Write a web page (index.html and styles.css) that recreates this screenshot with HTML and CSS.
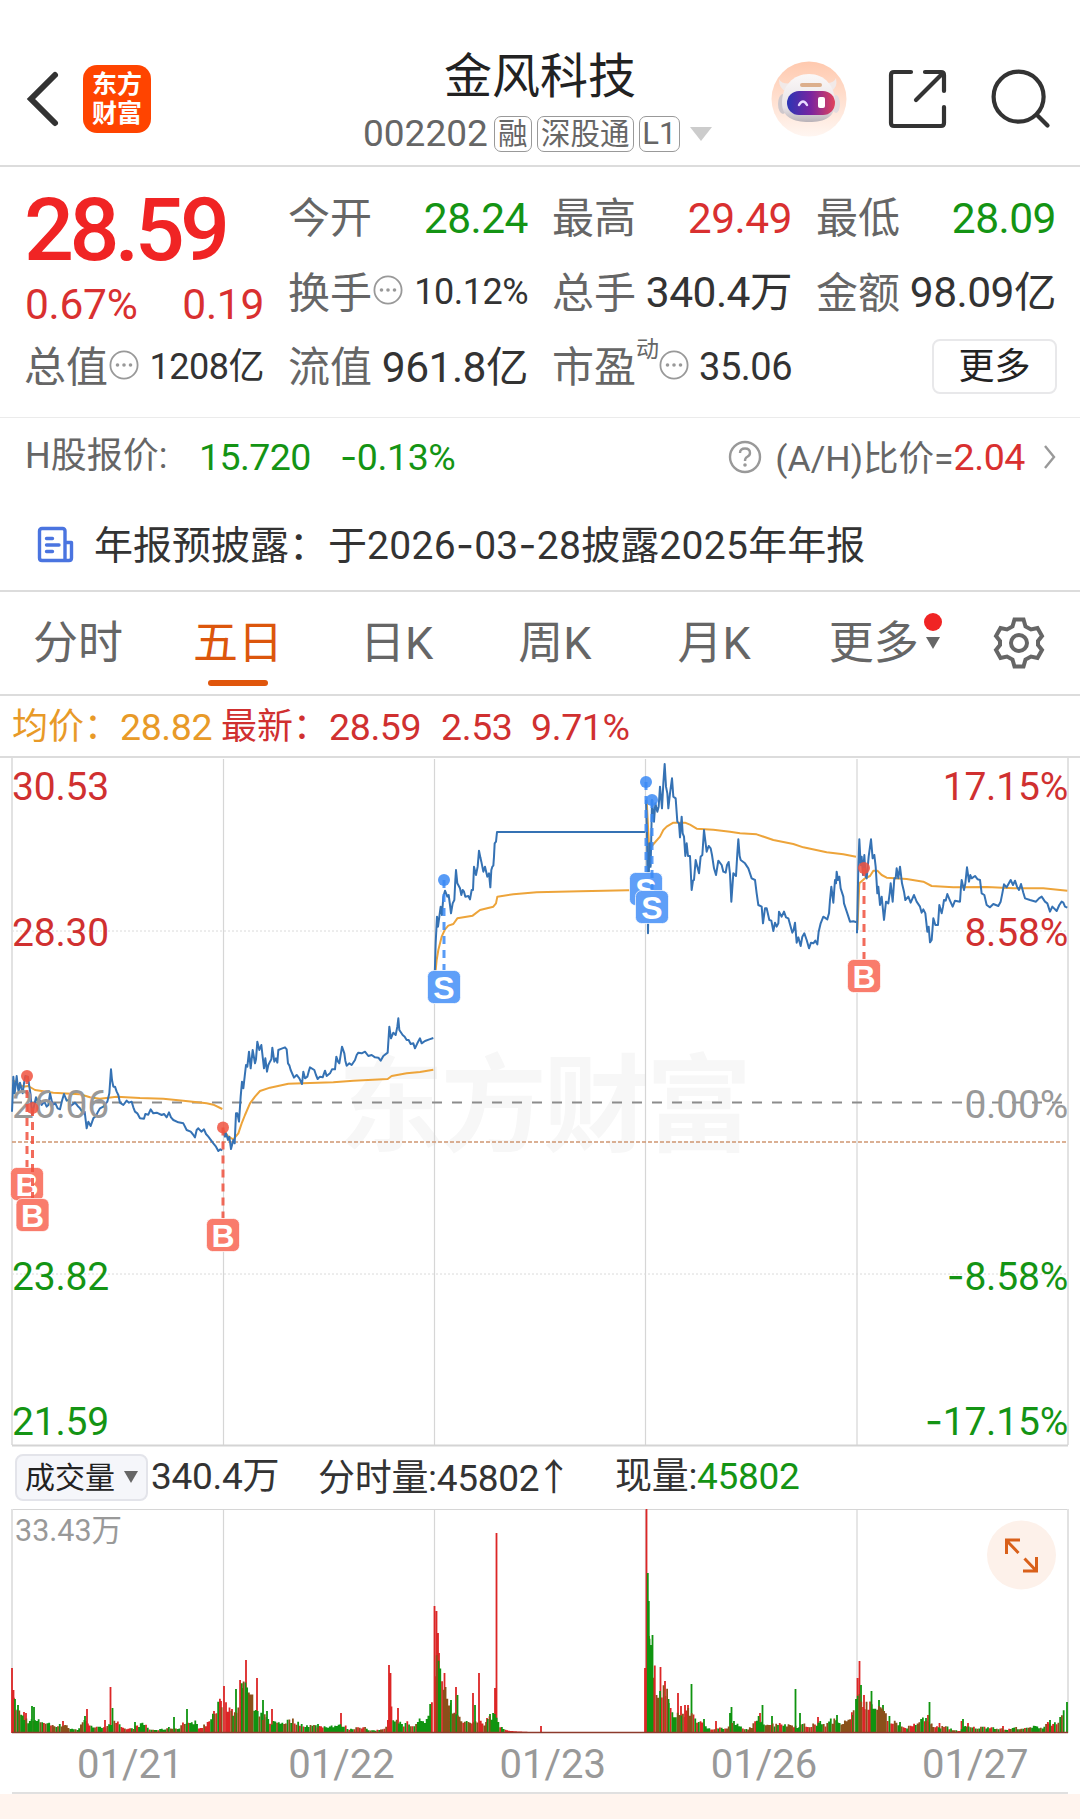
FILE: index.html
```html
<!DOCTYPE html>
<html lang="zh-CN">
  <head>
    <meta charset="UTF-8" />
    <meta name="viewport" content="width=device-width, initial-scale=1.0" />
    <title>金风科技 002202</title>
    <link rel="stylesheet" href="styles.css" />
  </head>
  <body>
    <header class="header">
      <div class="header-left">
        <svg class="back" width="36" height="60" viewBox="0 0 36 60">
          <path d="M30 6 L6 30 L30 54" fill="none" stroke="#333" stroke-width="6" stroke-linecap="round" />
        </svg>
        <div class="logo"><span>东方</span><span>财富</span></div>
      </div>
      <div class="header-title">
        <h1>金风科技</h1>
        <div class="code-row">
          <span class="code">002202</span>
          <span class="tag">融</span>
          <span class="tag tag-sgt">深股通</span>
          <span class="tag tag-l1">L1</span>
          <i class="caret"></i>
        </div>
      </div>
      <div class="header-right">
        <svg width="76" height="76" viewBox="0 0 76 76">
          <defs>
            <linearGradient id="halo" x1="0" y1="0" x2="0" y2="1">
              <stop offset="0" stop-color="#ffc9ae" />
              <stop offset="1" stop-color="#fff6f1" />
            </linearGradient>
            <linearGradient id="helmet" x1="0" y1="0" x2="0" y2="1">
              <stop offset="0" stop-color="#fbf8f8" />
              <stop offset=".7" stop-color="#e8e3e6" />
              <stop offset="1" stop-color="#b9b2b8" />
            </linearGradient>
            <linearGradient id="visor" x1="0" y1="0" x2="1" y2="0">
              <stop offset="0" stop-color="#2b35b5" />
              <stop offset=".5" stop-color="#7a249f" />
              <stop offset="1" stop-color="#e0435c" />
            </linearGradient>
          </defs>
          <circle cx="38" cy="38" r="37.5" fill="url(#halo)" />
          <path d="M8 18 Q8 28 15 30 L22 22 Q11 24 8 18 Z M65 17 Q67 27 60 30 L53 22 Q63 23 65 17 Z" fill="#f1e9e8" />
          <ellipse cx="12" cy="43" rx="5" ry="10" fill="#cfc8cc" />
          <ellipse cx="65" cy="43" rx="4" ry="9" fill="#e2dcdf" />
          <path d="M38 13 C54 13 64 25 64 42 C64 56 54 61 38 61 C22 61 11 56 11 42 C11 25 22 13 38 13 Z" fill="url(#helmet)" />
          <rect x="29" y="22" width="22" height="4" rx="2" fill="#dcae8c" />
          <rect x="16" y="30" width="48" height="24" rx="12" fill="url(#visor)" />
          <path d="M28 44 Q32 37 36 44" fill="none" stroke="#e9dcff" stroke-width="2.4" stroke-linecap="round" />
          <rect x="47" y="36" width="7" height="11" rx="2" fill="#fff" />
        </svg>
        <svg class="share" width="64" height="64" viewBox="0 0 64 64">
          <g fill="none" stroke="#333" stroke-width="4.2" stroke-linecap="round" stroke-linejoin="round">
            <path d="M25 5 H8 Q5 5 5 8 V56 Q5 59 8 59 H55 Q58 59 58 56 V40" />
            <path d="M39 5 H55 Q58 5 58 8 V24 M57 6 L30 33" />
          </g>
        </svg>
        <svg width="64" height="64" viewBox="0 0 64 64">
          <g fill="none" stroke="#333" stroke-width="4.2" stroke-linecap="round">
            <circle cx="31.6" cy="29.7" r="25" />
            <path d="M50 48 L60.5 58.500" />
          </g>
        </svg>
      </div>
    </header>

    <section class="quote">
      <div class="price">
        <div class="price-now">28.59</div>
        <div class="price-change"><span>0.67%</span><span>0.19</span></div>
      </div>
      <div class="cell"><label>今开</label><b class="down">28.24</b></div>
      <div class="cell"><label>最高</label><b class="up">29.49</b></div>
      <div class="cell"><label>最低</label><b class="down">28.09</b></div>
      <div class="cell">
        <label>换手</label>
        <svg class="dots" viewBox="0 0 30 30"><use href="#more-dots" /></svg>
        <b class="small">10.12%</b>
      </div>
      <div class="cell"><label>总手</label><b>340.4万</b></div>
      <div class="cell"><label>金额</label><b>98.09亿</b></div>
      <div class="cell">
        <label>总值</label>
        <svg class="dots" viewBox="0 0 30 30"><use href="#more-dots" /></svg>
        <b class="small">1208亿</b>
      </div>
      <div class="cell"><label>流值</label><b>961.8亿</b></div>
      <div class="cell">
        <label>市盈</label><sup>动</sup>
        <svg class="dots" viewBox="0 0 30 30"><use href="#more-dots" /></svg>
        <b class="medium">35.06</b>
      </div>
      <div class="cell cell-more"><button class="more-btn">更多</button></div>
    </section>

    <section class="hshare">
      <span class="hshare-label">H股报价:</span>
      <span class="hshare-price">15.720</span>
      <span class="hshare-pct"><i class="minus">-</i>0.13%</span>
      <div class="ratio">
        <svg width="34" height="34" viewBox="0 0 34 34">
          <circle cx="17" cy="17" r="15" fill="none" stroke="#999" stroke-width="2.4" />
          <path d="M12 13 Q12 8.5 17 8.5 Q22 8.5 22 13 Q22 15.5 19 17 Q17 18 17 21" fill="none" stroke="#999" stroke-width="2.4" />
          <circle cx="17" cy="25" r="1.8" fill="#999" />
        </svg>
        <span class="ratio-label">(A/H)比价=</span><span class="ratio-value">2.04</span>
        <svg class="arrow" width="14" height="26" viewBox="0 0 14 26">
          <path d="M2 2 L11 13 L2 24" fill="none" stroke="#999" stroke-width="2.4" />
        </svg>
      </div>
    </section>

    <section class="notice">
      <svg width="38" height="38" viewBox="0 0 38 38">
        <g fill="none" stroke="#4a74e0" stroke-width="3.4" stroke-linejoin="round" stroke-linecap="round">
          <path d="M28 34.5 V5 Q28 2.5 25.500 2.500 H5 Q2.500 2.500 2.500 5 V32 Q2.500 34.500 5 34.500 H32 Q34.500 34.500 34.500 32 V16.500 H29" />
          <path d="M9.500 12.500 H15.500 M9.500 19 H22 M9.500 25.500 H15.500" />
        </g>
      </svg>
      <span>年报预披露：于<em>2026<i class="minus">-</i>03<i class="minus">-</i>28</em>披露<em>2025</em>年年报</span>
    </section>

    <nav class="tabs">
      <a>分时</a>
      <a class="active">五日</a>
      <a>日K</a>
      <a>周K</a>
      <a>月K</a>
      <a class="tab-more">更多<i class="tab-caret"></i><i class="tab-dot"></i></a>
      <svg class="gear" width="54" height="54" viewBox="0 0 54 54">
        <g fill="none" stroke="#666" stroke-width="4" stroke-linejoin="miter">
          <path d="M22.500 3.500 H31.500 L33.500 10.500 L39 13.500 L45.500 12 L50 20 L46 25 V29 L50 34 L45.500 42 L39 40.500 L33.500 43.500 L31.500 50.500 H22.500 L20.500 43.500 L15 40.500 L8.500 42 L4 34 L8 29 V25 L4 20 L8.500 12 L15 13.500 L20.500 10.500 Z" />
          <circle cx="27" cy="27" r="8" />
        </g>
      </svg>
    </nav>

    <div class="legend">
      <span class="avg">均价：</span><span class="avg n1">28.82</span>
      <span class="last">最新：</span><span class="last n1">28.59</span>
      <span class="last n2">2.53</span>
      <span class="last n3">9.71%</span>
    </div>

    <svg class="chart" width="1080" height="689" viewBox="0 758 1080 689">
      <text class="watermark" x="338" y="1143" textLength="414">东方财富</text>
      <path class="grid" d="M223.500 759 V1445 M434.500 759 V1445 M645.500 759 V1445 M857 759 V1445" />
      <path class="grid-dot" d="M12 931 H1068 M12 1274 H1068" />
      <path class="frame" d="M12 758 V1445 M1068 758 V1445" />
      <path class="frame-bottom" d="M12 1445.500 H1068" />
      <path class="zero" d="M12 1102.500 H1068" />
      <path class="cost" d="M12 1142 H1068" />

      <g transform="translate(0 980) scale(.33333)">
        <polyline class="avg-line" points="38,300 50,310 70,320 85,318 105,330 160,338 240,343 270,352 300,356 350,350 420,354 490,356 550,362 620,370 640,374 667,387" />
        <polyline class="price-line" points="36,395 38,345 40,290 44,340 50,288 54,325 56,335 60,308 64,325 68,340 72,310 76,288 84,290 88,320 92,345 96,405 104,370 108,352 115,368 120,362 125,375 133,365 140,380 145,375 150,340 158,375 166,370 173,385 180,388 186,362 192,342 200,362 206,360 212,378 225,368 233,378 240,385 250,400 254,395 260,445 265,425 272,438 280,415 288,408 294,395 300,385 310,380 322,365 328,340 333,268 336,300 340,320 345,320 350,335 355,345 360,368 370,375 380,362 387,368 395,365 400,382 405,395 412,400 420,415 432,416 436,402 445,404 452,388 460,400 470,398 485,405 492,402 500,412 507,397 513,412 520,420 535,427 550,430 560,450 572,455 578,462 585,472 590,450 595,445 604,455 612,448 618,462 625,470 640,490 648,500 655,513 661,508 667,511" />
      </g>
      <g transform="translate(220 980) scale(.33333)">
        <polyline class="avg-line" points="10,450 25,470 40,478 55,460 65,430 75,405 90,370 105,350 120,333 150,323 205,311 270,309 340,307 400,302 503,297 515,288 560,280 600,276 640,269" />
        <polyline class="price-line" points="10,455 15,470 18,460 24,480 28,470 33,507 40,480 44,490 48,400 52,400 57,425 62,350 66,305 70,325 74,290 78,255 82,260 87,215 92,265 98,210 105,250 108,238 112,185 118,210 124,195 132,265 136,235 141,275 145,255 150,245 154,238 157,203 163,245 168,235 172,248 175,210 185,206 195,202 200,208 204,250 208,256 212,270 222,293 230,285 238,295 246,312 250,275 255,295 262,290 266,275 270,262 283,270 288,285 293,297 300,290 308,292 315,272 320,288 330,280 336,268 345,268 349,230 354,245 358,250 366,200 373,220 376,242 380,257 388,250 395,255 405,240 410,225 415,218 425,220 435,215 445,228 455,225 465,232 475,233 482,242 490,228 503,218 508,140 513,175 520,158 527,165 532,140 535,115 538,150 548,165 554,170 560,180 566,180 572,192 580,190 585,205 592,190 600,175 605,190 615,183 628,178 640,174" />
      </g>
      <g transform="translate(420 800) scale(.33333)">
        <polyline class="avg-line" points="46,520 50,480 55,450 65,410 75,388 85,377 100,372 112,355 158,347 180,330 220,320 228,310 232,290 280,283 350,277 480,274 624,271 677,271" />
        <polyline class="price-line" points="44,530 47,430 51,350 54,380 58,350 62,320 66,345 70,290 75,272 82,290 86,285 90,315 93,340 98,310 103,300 106,240 108,210 112,250 120,265 124,285 128,270 132,275 136,290 145,288 150,298 155,270 159,270 162,200 168,225 173,200 177,152 181,172 184,185 190,215 195,200 202,230 207,220 211,262 214,210 217,200 220,197 222,170 224,130 228,125 231,96 676,96" />
      </g>
      <g transform="translate(630 750) scale(.33333)">
        <polyline class="avg-line" points="50,150 54,230 58,300 68,285 90,260 100,240 110,230 130,218 165,218 180,224 200,236 250,239 300,245 330,250 380,253 430,270 490,282 520,292 590,307 640,313 678,320" />
        <polyline class="price-line" points="48,150 51,250 54,550 58,280 62,350 66,150 72,215 76,160 82,185 86,170 90,110 96,175 100,100 104,42 108,110 112,130 115,175 120,130 126,85 130,140 137,145 142,215 147,220 150,262 155,200 158,250 162,260 166,318 170,280 174,318 180,318 185,420 189,392 192,390 197,330 202,350 207,370 212,320 217,315 222,240 230,305 236,288 242,295 246,315 252,355 258,375 265,332 275,345 280,365 287,368 291,345 296,336 300,372 304,455 310,370 318,378 322,310 325,268 329,318 332,330 345,340 355,355 365,385 375,390 380,430 385,465 395,470 399,520 405,475 410,475 418,510 424,512 430,543 435,518 440,530 445,520 447,485 455,500 462,485 468,502 475,505 487,548 491,540 495,518 500,578 505,562 512,588 517,560 523,550 530,570 537,595 543,578 550,580 556,572 562,583 566,545 572,520 580,500 592,508 597,490 600,450 604,410 610,458 615,390 618,400 620,365 624,390 628,380 632,415 640,440 642,460 652,490 660,515 670,514 680,517" />
      </g>
      <g transform="translate(840 750) scale(.33333)">
        <polyline class="avg-line" points="52,540 58,400 75,385 90,378 100,362 112,362 125,375 140,383 200,387 250,395 275,408 340,412 440,411 520,415 610,415 682,422" />
        <polyline class="price-line" points="51,550 55,350 58,268 62,345 65,320 69,375 73,315 77,380 80,385 86,320 93,268 98,325 103,315 107,350 112,430 115,410 120,465 125,440 132,510 138,455 145,460 149,430 152,400 158,455 163,385 167,385 170,355 175,385 180,350 186,400 192,425 196,450 205,440 212,458 222,435 230,455 240,470 245,488 250,478 256,490 262,545 266,530 270,577 275,570 280,505 286,525 294,525 298,465 305,490 309,470 312,450 317,452 322,432 330,452 338,470 345,452 360,455 363,410 365,390 372,420 376,400 381,352 387,395 391,375 395,385 405,378 413,388 420,390 425,430 433,435 440,465 450,472 460,462 475,468 482,455 487,430 492,403 500,412 512,390 519,405 525,392 531,410 537,420 543,402 550,428 555,445 570,450 588,455 597,445 605,440 615,455 622,460 630,485 637,470 650,483 658,465 665,455 670,458 675,470 682,473" />
      </g>

      <g class="axis">
        <text class="up-t" x="12" y="800">30.53</text>
        <text class="up-t" x="12" y="946">28.30</text>
        <text class="mid-t" x="12" y="1118">26.06</text>
        <text class="down-t" x="12" y="1290">23.82</text>
        <text class="down-t" x="12" y="1435">21.59</text>
        <text class="up-t end" x="1068" y="800">17.15%</text>
        <text class="up-t end" x="1068" y="946">8.58%</text>
        <text class="mid-t end" x="1068" y="1118">0.00%</text>
        <text class="down-t end" x="1068" y="1290"><tspan class="minus">-</tspan>8.58%</text>
        <text class="down-t end" x="1068" y="1435"><tspan class="minus">-</tspan>17.15%</text>
      </g>

      <g id="trades"></g>
    </svg>

    <div class="vol-bar">
      <button class="vol-select">成交量<i></i></button>
      <span class="v-total">340.4万</span>
      <span class="v-minute">分时量:45802<span class="v-arrow">↑</span></span>
      <span class="v-now">现量:<b>45802</b></span>
    </div>

    <svg class="volume" width="1080" height="225" viewBox="0 1509 1080 225">
      <path class="grid" d="M12 1509.500 H1068 M223.500 1510 V1733 M434.500 1510 V1733 M645.500 1510 V1733 M857 1510 V1733" />
      <path class="frame" d="M12 1509 V1733 M1068 1509 V1733" />
      <path id="vol-up" fill="#dc2626" />
      <path id="vol-down" fill="#0f9410" />
      <path id="vol-mix" fill="#8a501a" />
      <path d="M12 1732.500 H1068" stroke="#8c3a2c" stroke-width="1.6" />
      <text class="vol-max" x="15" y="1541">33.43万</text>
      <circle cx="1021.500" cy="1555" r="34.500" fill="#fdf1ea" />
      <path d="M1020 1540 H1006.500 V1554 M1007 1541 L1018.500 1553 M1023 1571 H1036.500 V1557 M1036 1570.500 L1024.500 1558.500" fill="none" stroke="#d9601a" stroke-width="3" />
    </svg>

    <div class="dates">
      <span>01/21</span><span>01/22</span><span>01/23</span><span>01/26</span><span>01/27</span>
    </div>
    <footer class="footer"></footer>

    <svg class="sprite" width="0" height="0">
      <symbol id="more-dots" viewBox="0 0 30 30">
        <circle cx="15" cy="15" r="13.600" fill="none" stroke="#999" stroke-width="1.800" />
        <circle cx="8.500" cy="15" r="1.800" fill="#999" />
        <circle cx="15" cy="15" r="1.800" fill="#999" />
        <circle cx="21.500" cy="15" r="1.800" fill="#999" />
      </symbol>
    </svg>

    <script src="chart.js"></script>
  </body>
</html>
```
FILE: styles.css
```css
* {
  box-sizing: border-box;
}

body {
  margin: 0;
  width: 1080px;
  height: 1819px;
  overflow: hidden;
  background: #fff;
  color: #333;
  font-family: Roboto, "Noto Sans CJK SC", sans-serif;
}

button {
  font-family: inherit;
  color: #222;
}

b,
em {
  font-weight: 400;
  font-style: normal;
}

svg {
  flex: none;
}

/* wider minus sign than Roboto has */
.minus {
  font-family: Inter, sans-serif;
  font-style: normal;
}

/* header */
.header {
  height: 167px;
  border-bottom: 2px solid #dcdcdc;
  padding-top: 40px;
  display: grid;
  grid-template-columns: 330px 1fr 330px;
}

.header-left {
  display: flex;
  align-items: center;
  height: 118px;
  padding-left: 25px;
}

.logo {
  margin-left: 22px;
  width: 68px;
  height: 68px;
  border-radius: 14px;
  background: #ff4400;
  color: #fff;
  font-size: 25px;
  font-weight: 700;
  line-height: 29px;
  padding-top: 5px;
  text-align: center;
  display: flex;
  flex-direction: column;
}

.header-title {
  text-align: center;
}

h1 {
  margin: 0;
  font-size: 48px;
  line-height: 74px;
  height: 70px;
  font-weight: 400;
  color: #222;
}

.code-row {
  display: flex;
  align-items: center;
  height: 47px;
  padding-left: 33px;
  color: #666;
}

.code {
  font-size: 37px;
  line-height: 46px;
  margin-right: 6px;
}

.tag {
  width: 38px;
  height: 36px;
  line-height: 35px;
  border: 1.5px solid #999;
  border-radius: 7px;
  font-size: 29.5px;
  margin-right: 5px;
  display: flex;
  justify-content: center;
}

.tag-sgt {
  width: 97px;
}

.tag-l1 {
  width: 41px;
  font-size: 31px;
  line-height: 34px;
}

.caret {
  margin-left: 5px;
  border: 11px solid transparent;
  border-top: 14px solid #ccc;
  border-bottom: 0;
}

.header-right {
  display: flex;
  align-items: center;
  height: 118px;
  padding-left: 21px;
}

.share {
  margin: 0 37px 0 39px;
}

/* quote */
.quote {
  height: 251px;
  border-bottom: 1px solid #ebebeb;
  padding: 14px 25px 0;
  display: grid;
  grid-template-columns: repeat(4, 239px);
  grid-template-rows: repeat(3, 74.5px);
  column-gap: 25px;
}

.price {
  grid-row: span 2;
  padding-top: 10px;
  color: #f02424;
}

.price-now {
  font-size: 88px;
  font-weight: 500;
  line-height: 78px;
  height: 76px;
  letter-spacing: -4.6px;
  margin-left: -1px;
}

.price-change {
  display: flex;
  justify-content: space-between;
  font-size: 42.5px;
  line-height: 76px;
  letter-spacing: -0.3px;
  color: #d93030;
}

.cell {
  display: flex;
  align-items: center;
  white-space: nowrap;
  line-height: 60px;
}

.cell label {
  font-size: 42px;
  line-height: 63px;
  padding-top: 1px;
  margin-left: -1px;
  color: #666;
}

.cell b {
  margin-left: auto;
  font-size: 42.5px;
  line-height: 61px;
  letter-spacing: -0.5px;
}

.cell b.small {
  font-size: 36px;
}

.cell b.medium {
  font-size: 38px;
}

.cell b.up {
  color: #d93030;
}

.cell b.down {
  color: #149414;
}

.cell sup {
  align-self: flex-start;
  font-size: 23px;
  line-height: 32px;
  color: #666;
  margin: 4px -1px 0 0;
}

.dots {
  width: 30px;
  height: 30px;
  margin: -5px 0 0 1px;
}

.cell-more {
  justify-content: flex-end;
}

.more-btn {
  width: 125px;
  height: 55px;
  border: 2px solid #e8e8ea;
  border-radius: 8px;
  background: #fff;
  font-size: 36px;
  line-height: 48px;
  padding: 0;
  margin: -1px -1px 0 0;
}

/* H share line */
.hshare {
  height: 82px;
  padding: 0 23px 5px 25px;
  display: flex;
  align-items: center;
  font-size: 37.5px;
  white-space: nowrap;
}

.hshare-label {
  font-size: 36px;
  line-height: 50px;
  padding-bottom: 2px;
  color: #666;
  width: 174px;
}

.hshare-price {
  color: #149414;
  width: 141px;
  letter-spacing: -0.6px;
}

.hshare-pct {
  color: #149414;
  letter-spacing: -0.4px;
}

.ratio {
  margin-left: auto;
  display: flex;
  align-items: center;
}

.ratio-label {
  margin-left: 13px;
  padding-bottom: 2px;
  color: #666;
  font-size: 35.5px;
}

.ratio-value {
  color: #d93030;
  letter-spacing: -0.4px;
}

.arrow {
  margin-left: 18px;
}

/* notice */
.notice {
  height: 92px;
  border-bottom: 2px solid #dcdcdc;
  padding-left: 37px;
  display: flex;
  align-items: center;
  font-size: 39px;
  white-space: nowrap;
}

.notice span {
  margin-left: 19px;
  padding-bottom: 6px;
}

.notice em {
  letter-spacing: 0.3px;
}

/* tabs */
.tabs {
  height: 104px;
  border-bottom: 2px solid #dcdcdc;
  display: flex;
  align-items: center;
  padding-left: 33px;
  font-size: 45px;
  line-height: 106px;
  color: #666;
}

.tabs a {
  position: relative;
  height: 104px;
}

.tabs a:nth-child(2) {
  margin-left: 70px;
}

.tabs a:nth-child(3) {
  margin-left: 77px;
}

.tabs a:nth-child(4) {
  margin-left: 85px;
}

.tabs a:nth-child(5) {
  margin-left: 86px;
}

.tabs a:nth-child(6) {
  margin-left: 78px;
}

.tabs .active {
  color: #dc560c;
}

.tabs .active::after {
  content: "";
  position: absolute;
  left: 15px;
  bottom: 9px;
  width: 60px;
  height: 6px;
  border-radius: 3px;
  background: #e0560c;
}

.tab-caret {
  position: absolute;
  left: 97px;
  top: 46px;
  border: 7.5px solid transparent;
  border-top: 12px solid #666;
  border-bottom: 0;
}

.tab-dot {
  position: absolute;
  left: 95px;
  top: 22px;
  width: 18px;
  height: 18px;
  border-radius: 50%;
  background: #f02424;
}

.gear {
  margin-left: auto;
  margin-right: 34px;
}

/* legend above chart */
.legend {
  height: 62px;
  border-bottom: 2px solid #dcdcdc;
  padding-left: 12px;
  display: flex;
  line-height: 62px;
  font-size: 36px;
  white-space: nowrap;
}

.legend .n1,
.legend .n2,
.legend .n3 {
  font-size: 37.5px;
  letter-spacing: -0.4px;
}

.legend .n1 {
  width: 101px;
}

.legend .n2 {
  margin-left: 11px;
  width: 90px;
}

.avg {
  color: #e89a28;
}

.last {
  color: #d03030;
}

/* charts */
.chart,
.volume {
  display: block;
}

.grid {
  stroke: #d6d6d6;
  stroke-width: 1.2;
  fill: none;
}

.grid-dot {
  stroke: #dadada;
  stroke-width: 1;
  stroke-dasharray: 2 2;
}

.frame {
  stroke: #e2e2e2;
  stroke-width: 2;
}

.frame-bottom {
  stroke: #d4d4d4;
  stroke-width: 2;
}

.zero {
  stroke: #8c8c8c;
  stroke-width: 2;
  stroke-dasharray: 10 10;
}

.cost {
  stroke: #cf9672;
  stroke-width: 1.6;
  stroke-dasharray: 4 2;
}

.watermark {
  font-size: 106px;
  font-weight: 700;
  fill: #f7f7f7;
}

.price-line,
.avg-line {
  fill: none;
  stroke-width: 2;
  stroke-linejoin: round;
  vector-effect: non-scaling-stroke;
}

.price-line {
  stroke: #3572b4;
}

.avg-line {
  stroke: #eda43a;
}

.axis text {
  font-size: 39px;
  letter-spacing: -0.2px;
}

.axis .end {
  text-anchor: end;
}

.up-t {
  fill: #d03030;
}

.down-t {
  fill: #149414;
}

.mid-t {
  fill: #999;
}

.trade-letter {
  font-family: "Liberation Sans", sans-serif;
  font-size: 32px;
  font-weight: 700;
  fill: #fff;
  text-anchor: middle;
}

/* volume header */
.vol-bar {
  height: 62px;
  padding: 0 0 2px 15px;
  display: flex;
  align-items: center;
  font-size: 37px;
  line-height: 62px;
  letter-spacing: -0.3px;
  white-space: nowrap;
}

.vol-select {
  width: 133px;
  height: 47px;
  border: 2px solid #e3e4ea;
  border-radius: 8px;
  background: #f5f6fa;
  font-size: 30px;
  line-height: 43px;
  padding: 0 0 0 8px;
  display: flex;
  align-items: center;
}

.vol-select i {
  margin-left: 9px;
  border: 7.5px solid transparent;
  border-top: 12px solid #666;
  border-bottom: 0;
}

.v-total {
  width: 167px;
  margin-left: 3px;
}

.v-minute {
  width: 297px;
}

.v-arrow {
  font-family: "Noto Sans CJK SC", sans-serif;
  margin-left: -4px;
}

.v-now b {
  color: #149414;
}

.vol-max {
  font-size: 30.5px;
  fill: #999;
}

/* dates */
.dates {
  height: 60px;
  margin: 0 12px;
  padding-left: 11px;
  border-bottom: 2px solid #e0e0e0;
  display: grid;
  grid-template-columns: repeat(5, 211.3px);
  text-align: center;
  text-indent: 3px;
  font-size: 40px;
  line-height: 62px;
  color: #999;
}

.footer {
  height: 25px;
  background: #fff4ee;
}

.sprite {
  position: absolute;
}
```
FILE: chart.js
```js
// buy / sell markers: letter, x, dot y, badge y
const trades = [
  ["B", 27, 1076, 1184],
  ["B", 32.5, 1108, 1215],
  ["B", 223, 1127.5, 1235],
  ["S", 444, 880, 987],
  ["S", 646, 782, 889],
  ["S", 652, 800, 907],
  ["B", 864, 868, 976],
];

let marks = "";
for (const [letter, x, dot, badge] of trades) {
  const line = letter === "B" ? "#f0523f" : "#3b8af5";
  const fill = letter === "B" ? "#f97c6c" : "#5f9ff8";
  marks += `<line x1="${x}" x2="${x}" y1="${dot}" y2="${badge - 17}" stroke="${line}" stroke-width="3" stroke-dasharray="8 6" opacity=".85"/>
    <circle cx="${x}" cy="${dot}" r="6" fill="${line}" opacity=".85"/>
    <rect x="${x - 16.5}" y="${badge - 16.5}" width="33" height="33" rx="6" fill="${fill}" stroke="#fff" stroke-opacity=".7"/>
    <text class="trade-letter" x="${x}" y="${badge + 11.5}">${letter}</text>`;
}
document.getElementById("trades").innerHTML = marks;

// volume: "x:height", with r / g for single red or green spikes
const volume = [
  "12:65r 13.5:43r 15:34g 14:28 18:28g 20:18 24:21r 26:20r 27:12 32:27g 34:26g 36:11 43:11 50:8 58:7 63:12r 66:8 70:4 78:3 82:11 85:17g 87:24r 90:9 95:5 101:5 105:13r 108:8 110.5:46r 112.5:25g 115:10 118:9 122:4 132:4 135:11g 140:8 145:8 150:3 160:3 170:5 174:16g 178:4 184:10 187:24g 190:8 195:12 198:5 205:7 210:12 214:22r 218:24 221:32r 223:32",
  "224:47r 226:28 230:22 232:24r 234:20 236:44g 238:28 240:42 243:45g 246:73r 248:42 251:36 253:32 254:20 257:55r 259:16 263:33g 265:15 267:22g 270:10 272:24r 276:10 285:10 290:12 295:11 300:8 308:7 318:9g 325:6 335:7 341:20r 344:7 350:3 358:6 365:5 370:2 380:3 386:6 389:68r 390.5:60r 391.500:22 393:16 396:10 398:25r 400:13 403:7 408:10 413:5 417:8 421:13 426:11 429:18 431:28 433:40",
  "434.500:127r 435:70 436.500:122r 438:100r 439:80r 440:62g 442:48 444.500:60r 446:38 449:30 451:33g 453:20 456:46r 457.500:38g 459:15 462:13 465:10 470:12 473:40r 475:28g 477:10 479:60r 481:13 484:8 487:15r 490:19g 494:18 495:45r 496.500:200r 498:15 500:6 503:4 510:2 530:1 541:7r 542:1 644:1",
  "645:65r 646.500:225r 647.800:160g 648.800:132g 649:97r 649.500:75 651:70 652.500:98g 653.500:60 656:45 658:28 660.500:66r 662:42 665:52r 667:38 668.500:34g 670:20 674:18 678:40r 681:27r 683:17 685:28r 688:28r 690:20 691.500:49g 693:18 696:13 700:10 704:14g 707:5 712:4 716:12r 718:5 727:4 730:20g 731.500:26g 733:11 738:7 745:3 750:5 755:9 759:14 760:20r 762.500:28g 764:10 768:8 772:17g 775:8 780:10 785:7 791:8 795.500:44g 797:6 800:20g 803:8 808:6 815:8 818:16r 822:10 826:7 831:12 837:18g 840:10 845:12 850:16 853:18g 855:20",
  "856:30 857.500:55r 859.500:72r 861:48g 862:32 864:38r 867:27 869:30 871.500:42g 874:18 877:28 879:33g 881:24 883:28g 886:16 891:12 900:9 903:5 912:6 918:10 924:13 926:15g 928:18r 929.500:31g 931:8 938:5 939.500:10r 945:6 953:3 960:2 961.500:12r 963:14g 965:6 968:10r 972:5 980:5 990:6 1000:4 1003:7r 1007:3 1015:5 1025:4 1035:6 1043:5 1047:10 1050:13g 1054:8 1058:12 1062:14 1065:22 1067:31g",
];

const base = 1733;
const paths = { up: "", down: "", mix: "" };

function bar(kind, x, h) {
  paths[kind] += `M${x - 0.9} ${base}v${-h}h1.8v${h}z`;
}

let seed = 7;
function rand() {
  seed = (seed * 16807) % 2147483647;
  return seed / 2147483647;
}

volume.forEach((day) => {
  const items = day.split(" ").map((s) => {
    const [x, h] = s.split(":");
    return { x: +x, h: parseFloat(h), c: h.match(/[rg]/)?.[0] };
  });
  const level = items.filter((p) => !p.c).sort((a, b) => a.x - b.x);
  items.filter((p) => p.c).forEach((p) => bar(p.c === "r" ? "up" : "down", p.x, p.h));
  for (let x = level[0].x; x <= level[level.length - 1].x; x += 1.76) {
    const i = Math.max(1, level.findIndex((p) => p.x >= x));
    const a = level[i - 1];
    const b = level[i];
    const h = a.h + ((b.h - a.h) * (x - a.x)) / (b.x - a.x);
    const r = rand();
    const flat = x > 505 && x < 644;
    const kind = flat || r < 0.28 ? "up" : r < 0.62 ? "mix" : "down";
    bar(kind, x, flat ? h : h * (0.8 + rand() * 0.5));
  }
});

for (const kind in paths) {
  document.getElementById(`vol-${kind}`).setAttribute("d", paths[kind]);
}
```
